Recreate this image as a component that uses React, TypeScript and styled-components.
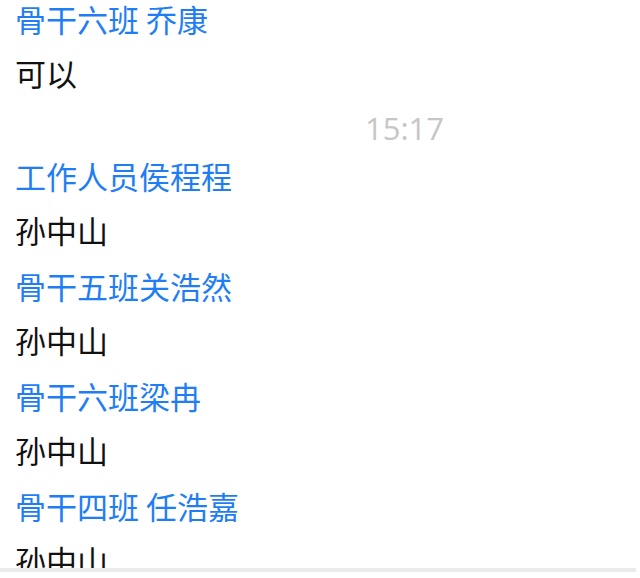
import React from 'react';
import styled, { createGlobalStyle } from 'styled-components';

type ChatItem =
    | { kind: 'time'; text: string }
    | { kind: 'msg'; sender: string; text: string };

const items: ChatItem[] = [
    { kind: 'msg', sender: '骨干六班 乔康', text: '可以' },
    { kind: 'time', text: '15:17' },
    { kind: 'msg', sender: '工作人员侯程程', text: '孙中山' },
    { kind: 'msg', sender: '骨干五班关浩然', text: '孙中山' },
    { kind: 'msg', sender: '骨干六班梁冉', text: '孙中山' },
    { kind: 'msg', sender: '骨干四班 任浩嘉', text: '孙中山' },
];

const GlobalStyle = createGlobalStyle`
    html, body {
        margin: 0;
        padding: 0;
        background: #ffffff;
    }
    body {
        font-family: "Noto Sans CJK SC", "Noto Sans", sans-serif;
    }
`;

const App: React.FC = () => {
    return (
        <>
            <GlobalStyle />
            <Frame>
                <ChatLog>
                    <ChatInner>
                        {items.map((item, index) =>
                            item.kind === 'time' ? (
                                <TimeStamp key={index}>{item.text}</TimeStamp>
                            ) : (
                                <Message key={index}>
                                    <Sender>{item.sender}</Sender>
                                    <Body>{item.text}</Body>
                                </Message>
                            )
                        )}
                    </ChatInner>
                </ChatLog>
                <ScrollTrack>
                    <ScrollThumb />
                </ScrollTrack>
            </Frame>
        </>
    );
};

export default App;

const Frame = styled.div`
    display: flex;
    flex-direction: column;
    height: 578px;
    width: 640px;
    overflow: hidden;
    background: #ffffff;
`;

const ChatLog = styled.div`
    flex: 1;
    overflow: hidden;
    min-height: 0;
`;

const ChatInner = styled.div`
    margin-top: -9px;
    padding-left: 15px;
`;

const Message = styled.div`
    display: flex;
    flex-direction: column;
`;

const Line = styled.div`
    font-family: "Noto Sans CJK SC", "Noto Sans", sans-serif;
    font-size: 31px;
    line-height: 55px;
    height: 55px;
    white-space: nowrap;
`;

const Sender = styled(Line)`
    color: #1f7ef4;
`;

const Body = styled(Line)`
    color: #111111;
    line-height: 53px;
`;

const TimeStamp = styled.div`
    box-sizing: border-box;
    font-family: "Open Sans", "Noto Sans", sans-serif;
    font-size: 31px;
    line-height: 40px;
    height: 47px;
    padding-top: 7px;
    padding-left: 350px;
    color: #c6c6c6;
`;

const ScrollTrack = styled.div`
    display: flex;
    height: 4px;
    margin: 0 0 6px 0;
    background: #ffffff;
`;

const ScrollThumb = styled.div`
    flex: 1;
    margin-right: 4px;
    background: #ebebeb;
`;
